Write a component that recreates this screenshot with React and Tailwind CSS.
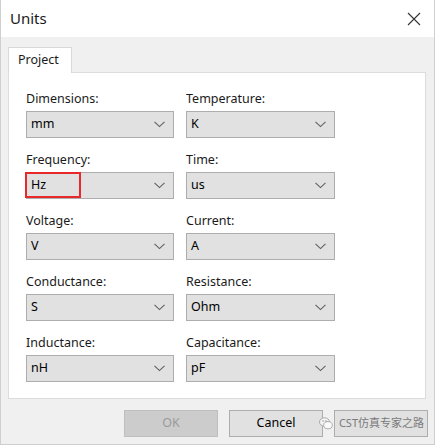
const font = { fontFamily: '"Noto Sans", "Open Sans", sans-serif' };

const rows = [
  ['Dimensions:', 'mm', 'Temperature:', 'K'],
  ['Frequency:', 'Hz', 'Time:', 'us'],
  ['Voltage:', 'V', 'Current:', 'A'],
  ['Conductance:', 'S', 'Resistance:', 'Ohm'],
  ['Inductance:', 'nH', 'Capacitance:', 'pF'],
];

const Chevron = () => (
  <svg width="11" height="7" viewBox="0 0 11 7" className="shrink-0">
    <path d="M0.5 0.8 L5.5 5.6 L10.5 0.8" fill="none" stroke="#5f5f5f" strokeWidth="1.1" />
  </svg>
);

const Select = ({ value, highlight }) => (
  <div className="relative flex h-[27px] items-center justify-between border border-[#adadad] bg-[#e1e1e1] pl-[4px] pr-[8px] text-[12.5px] text-black">
    <span>{value}</span>
    <Chevron />
    {highlight && (
      <div className="absolute left-[-2px] top-[-1px] h-[26px] w-[56px] border-2 border-[#e8282a]" />
    )}
  </div>
);

const Field = ({ label, value, highlight }) => (
  <div className="flex flex-col">
    <div className="h-[20px] text-[12.5px] leading-[16px] text-[#1a1a1a]">{label}</div>
    <Select value={value} highlight={highlight} />
  </div>
);

const WeChatIcon = () => (
  <svg width="14" height="13" viewBox="0 0 14 13">
    <ellipse cx="5.5" cy="5" rx="5" ry="4.2" fill="#f4f4f4" stroke="#9a9a9a" strokeWidth="0.8" />
    <ellipse cx="9" cy="8.2" rx="4.3" ry="3.6" fill="#fafafa" stroke="#9a9a9a" strokeWidth="0.8" />
    <circle cx="4" cy="4" r="0.7" fill="#888" />
    <circle cx="7" cy="4" r="0.7" fill="#888" />
  </svg>
);

const App = () => {
  return (
    <div className="h-[446px] w-[436px] bg-white" style={font}>
      <div className="flex h-[445px] w-[435px] flex-col border-x border-b border-[#cfcfcf]">
        <div className="flex h-[37px] items-center justify-between bg-white pl-[9px] pr-[13px]">
          <span className="text-[15px] text-[#1a1a1a]">Units</span>
          <svg width="14" height="14" viewBox="0 0 14 14">
            <path d="M1 1 L13 13 M13 1 L1 13" stroke="#333" strokeWidth="1.1" />
          </svg>
        </div>
        <div className="flex flex-1 flex-col bg-[#f0f0f0] pl-[7px] pr-[8px] pt-[10px]">
          <div className="flex">
            <div className="relative z-10 -mb-px flex h-[26px] w-[64px] items-center border-x border-t border-[#d9d9d9] bg-white pl-[9px] text-[12.5px] text-[#1a1a1a]">
              Project
            </div>
          </div>
          <div className="h-[327px] w-[418px] border border-[#dcdcdc] bg-white pl-[17px] pt-[18px]">
            <div className="flex flex-col gap-[14px]">
              {rows.map(([l1, v1, l2, v2]) => (
                <div key={l1} className="grid grid-cols-[148px_149px] gap-[12px]">
                  <Field label={l1} value={v1} highlight={v1 === 'Hz'} />
                  <Field label={l2} value={v2} />
                </div>
              ))}
            </div>
          </div>
          <div className="-mr-[2px] mt-[11px] flex items-center justify-end gap-[11px]">
            <div className="flex h-[27px] w-[94px] items-center justify-center border border-[#bfbfbf] bg-[#cccccc] text-[12.5px] text-[#9a9a9a]">
              OK
            </div>
            <div className="flex h-[27px] w-[94px] items-center justify-center border border-[#adadad] bg-[#e1e1e1] text-[12.5px] text-black">
              Cancel
            </div>
            <div className="relative flex h-[27px] w-[94px] items-center justify-end border border-[#adadad] bg-[#e1e1e1] pr-[3px] text-[11px] text-[#7a7a7a]">
              <div className="absolute left-[-16px] top-[6px]">
                <WeChatIcon />
              </div>
              <span style={{ fontFamily: '"Noto Sans", "Noto Sans CJK SC", sans-serif' }}>CST仿真专家之路</span>
            </div>
          </div>
        </div>
      </div>
    </div>
  );
};

export default App;
